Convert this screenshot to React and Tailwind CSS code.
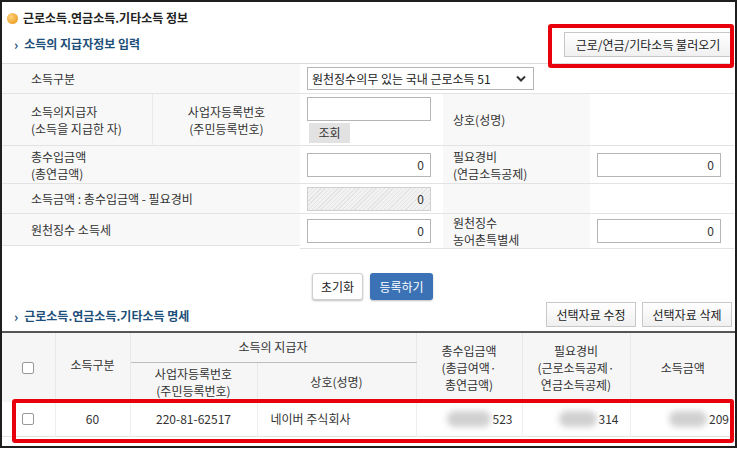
import React from "react";

const font = { fontFamily: '"Noto Sans CJK KR", "Noto Sans", sans-serif' };

function Chevron() {
  return <span className="mr-[6px] text-[13px] font-bold leading-none text-[#1d4f7a]">›</span>;
}

function Input({ value = "", disabled = false }) {
  return (
    <div
      className={`flex h-[24px] w-[124px] items-center justify-end border border-[#b5b5b5] pr-[6px] text-[12px] text-[#333] ${
        disabled ? "bg-[repeating-linear-gradient(135deg,#e4e4e4_0px,#e4e4e4_1px,#f2f2f2_1px,#f2f2f2_3px)] border-[#cfcfcf]" : "bg-white"
      }`}
    >
      {value}
    </div>
  );
}

function Check() {
  return <div className="mx-auto h-[12px] w-[12px] rounded-[2px] border border-[#999] bg-white" />;
}

function Blob({ w }) {
  return (
    <span className="relative mr-[2px] inline-block h-[18px]" style={{ width: w }}>
      <span className="absolute inset-x-0 top-[1px] h-[16px] rounded-full bg-[#d0d0d0] blur-[3px]" />
    </span>
  );
}

export default function App() {
  const lab = "bg-[#f8f8f8] text-[12px] text-[#333] leading-[17px] flex items-center";
  const row = "border-b border-[#e3e3e3]";
  return (
    <div className="h-[450px] w-[740px] bg-white" style={font}>
      <div className="relative flex h-[448px] w-[737px] flex-col border-2 border-[#1e1e1e] bg-white">
        {/* Title */}
        <div className="flex h-[26px] items-center pl-[5px] pt-[6px]">
          <span className="mr-[5px] inline-block h-[11px] w-[11px] rounded-full bg-[radial-gradient(circle_at_35%_35%,#ffd27a,#e8900f)]" />
          <span className="text-[12px] font-bold text-[#222]">근로소득.연금소득.기타소득 정보</span>
        </div>
        <div className="flex h-[35px] items-center justify-between pl-[12px] pr-[3px]">
          <div className="flex items-center pb-[3px] text-[12px] font-bold text-[#1d4f7a]">
            <Chevron />
            소득의 지급자정보 입력
          </div>
          <div className="mb-[2px] flex h-[25px] w-[168px] items-center justify-center border border-[#c8c8c8] bg-[linear-gradient(#ffffff,#f0f0f0)] text-[12px] text-[#222]">
            근로/연금/기타소득 불러오기
          </div>
        </div>
        {/* red highlight on load button */}
        <div className="absolute left-[546px] top-[22px] h-[44px] w-[186px] rounded-[3px] border-4 border-[#e8000b]" />

        {/* Form table */}
        <div className="grid grid-cols-[151px_147px_143px_147px_144px] border-t border-[#dcdcdc]">
          {/* row1 */}
          <div className={`${lab} ${row} col-span-2 h-[30px] pl-[29px]`}>소득구분</div>
          <div className={`${row} col-span-3 flex items-center bg-white pl-[7px]`}>
            <div className="flex h-[23px] w-[227px] items-center justify-between border border-[#b5b5b5] bg-white pl-[4px] pr-[7px] text-[12px] text-[#222]">
              <span>원천징수의무 있는 국내 근로소득 51</span>
              <svg width="10" height="7" viewBox="0 0 10 7"><path d="M1 1.5 L5 5.5 L9 1.5" stroke="#333" strokeWidth="2" fill="none" /></svg>
            </div>
          </div>
          {/* row2 */}
          <div className={`${lab} ${row} h-[52px] flex-col !items-start justify-center border-r border-r-[#eaeaea] pl-[29px]`}>
            <span>소득의지급자</span>
            <span>(소득을 지급한 자)</span>
          </div>
          <div className={`${lab} ${row} flex-col justify-center`}>
            <span>사업자등록번호</span>
            <span>(주민등록번호)</span>
          </div>
          <div className={`${row} flex flex-col justify-center gap-[2px] bg-white pl-[7px]`}>
            <Input />
            <div className="ml-[2px] flex h-[20px] w-[41px] items-center justify-center bg-[#e2e2e2] text-[12px] text-[#333]">조회</div>
          </div>
          <div className={`${lab} ${row} pl-[10px]`}>상호(성명)</div>
          <div className={`${row} bg-white`} />
          {/* row3 */}
          <div className={`${lab} ${row} col-span-2 h-[38px] flex-col !items-start justify-center pl-[29px]`}>
            <span>총수입금액</span>
            <span>(총연금액)</span>
          </div>
          <div className={`${row} flex items-center bg-white pl-[7px]`}><Input value="0" /></div>
          <div className={`${lab} ${row} flex-col !items-start justify-center pl-[10px]`}>
            <span>필요경비</span>
            <span>(연금소득공제)</span>
          </div>
          <div className={`${row} flex items-center bg-white pl-[7px]`}><Input value="0" /></div>
          {/* row4 */}
          <div className={`${lab} ${row} col-span-2 h-[30px] pl-[29px]`}>소득금액 : 총수입금액 - 필요경비</div>
          <div className={`${row} flex items-center bg-white pl-[7px]`}><Input value="0" disabled /></div>
          <div className={`${lab} ${row}`} />
          <div className={`${row} bg-white`} />
          {/* row5 */}
          <div className={`${lab} ${row} col-span-2 h-[32px] pl-[29px]`}>원천징수 소득세</div>
          <div className={`${row} flex items-center bg-white pl-[7px]`}><Input value="0" /></div>
          <div className={`${lab} ${row} flex-col !items-start justify-center pl-[10px]`}>
            <span>원천징수</span>
            <span>농어촌특별세</span>
          </div>
          <div className={`${row} flex items-center bg-white pl-[7px]`}><Input value="0" /></div>
        </div>

        {/* action buttons */}
        <div className="mt-[24px] flex justify-center gap-[7px] pl-[8px]">
          <div className="flex h-[27px] w-[51px] items-center justify-center rounded-[3px] border border-[#cfcfcf] bg-white text-[12px] text-[#222] shadow-[0_1px_2px_rgba(0,0,0,0.25)]">초기화</div>
          <div className="flex h-[27px] w-[63px] items-center justify-center rounded-[3px] bg-[#3b72b6] text-[12px] text-white shadow-[0_1px_2px_rgba(0,0,0,0.25)]">등록하기</div>
        </div>

        {/* list section header */}
        <div className="mt-[1px] flex h-[30px] items-end justify-between pl-[12px] pr-[3px]">
          <div className="flex items-center pb-[6px] text-[12px] font-bold text-[#1d4f7a]">
            <Chevron />
            근로소득.연금소득.기타소득 명세
          </div>
          <div className="mb-[4px] flex gap-[6px]">
            <div className="flex h-[25px] w-[90px] items-center justify-center border border-[#c8c8c8] bg-[linear-gradient(#ffffff,#f0f0f0)] text-[12px] text-[#222]">선택자료 수정</div>
            <div className="flex h-[25px] w-[90px] items-center justify-center border border-[#c8c8c8] bg-[linear-gradient(#ffffff,#f0f0f0)] text-[12px] text-[#222]">선택자료 삭제</div>
          </div>
        </div>

        {/* list table */}
        <table className="w-[733px] table-fixed border-collapse border-t-2 border-t-[#555] text-[12px] text-[#333]">
          <colgroup>
            <col className="w-[53px]" />
            <col className="w-[75px]" />
            <col className="w-[127px]" />
            <col className="w-[159px]" />
            <col className="w-[106px]" />
            <col className="w-[108px]" />
            <col className="w-[105px]" />
          </colgroup>
          <thead>
            <tr className="h-[30px] bg-[#f6f6f6]">
              <th rowSpan={2} className="border-r border-[#e8e8e8] font-normal"><Check /></th>
              <th rowSpan={2} className="border-r border-[#e8e8e8] pb-[6px] font-normal">소득구분</th>
              <th colSpan={2} className="border-b border-[#bdbdbd] font-normal">소득의 지급자</th>
              <th rowSpan={2} className="border-r border-l border-[#e8e8e8] font-normal leading-[17px]">총수입금액<br />(총급여액·<br />총연금액)</th>
              <th rowSpan={2} className="border-r border-[#e8e8e8] font-normal leading-[17px]">필요경비<br />(근로소득공제·<br />연금소득공제)</th>
              <th rowSpan={2} className="font-normal">소득금액</th>
            </tr>
            <tr className="h-[40px] bg-[#f6f6f6]">
              <th className="border-r border-[#e8e8e8] font-normal leading-[17px]">사업자등록번호<br />(주민등록번호)</th>
              <th className="font-normal">상호(성명)</th>
            </tr>
          </thead>
          <tbody>
            <tr className="h-[34px] border-b border-[#e3e3e3]">
              <td className="border-r border-[#eeeeee]"><Check /></td>
              <td className="border-r border-[#eeeeee] text-center">60</td>
              <td className="border-r border-[#eeeeee] text-center">220-81-62517</td>
              <td className="border-r border-[#eeeeee] pl-[13px]">네이버 주식회사</td>
              <td className="border-r border-[#eeeeee] pr-[9px] text-right"><div className="flex items-center justify-end"><Blob w={44} />523</div></td>
              <td className="border-r border-[#eeeeee] pr-[11px] text-right"><div className="flex items-center justify-end"><Blob w={38} />314</div></td>
              <td className="pr-[6px] text-right"><div className="flex items-center justify-end"><Blob w={38} />209</div></td>
            </tr>
          </tbody>
        </table>
        {/* red highlight on data row */}
        <div className="absolute left-[10px] top-[397px] h-[44px] w-[722px] rounded-[3px] border-4 border-[#e8000b]" />
      </div>
    </div>
  );
}
